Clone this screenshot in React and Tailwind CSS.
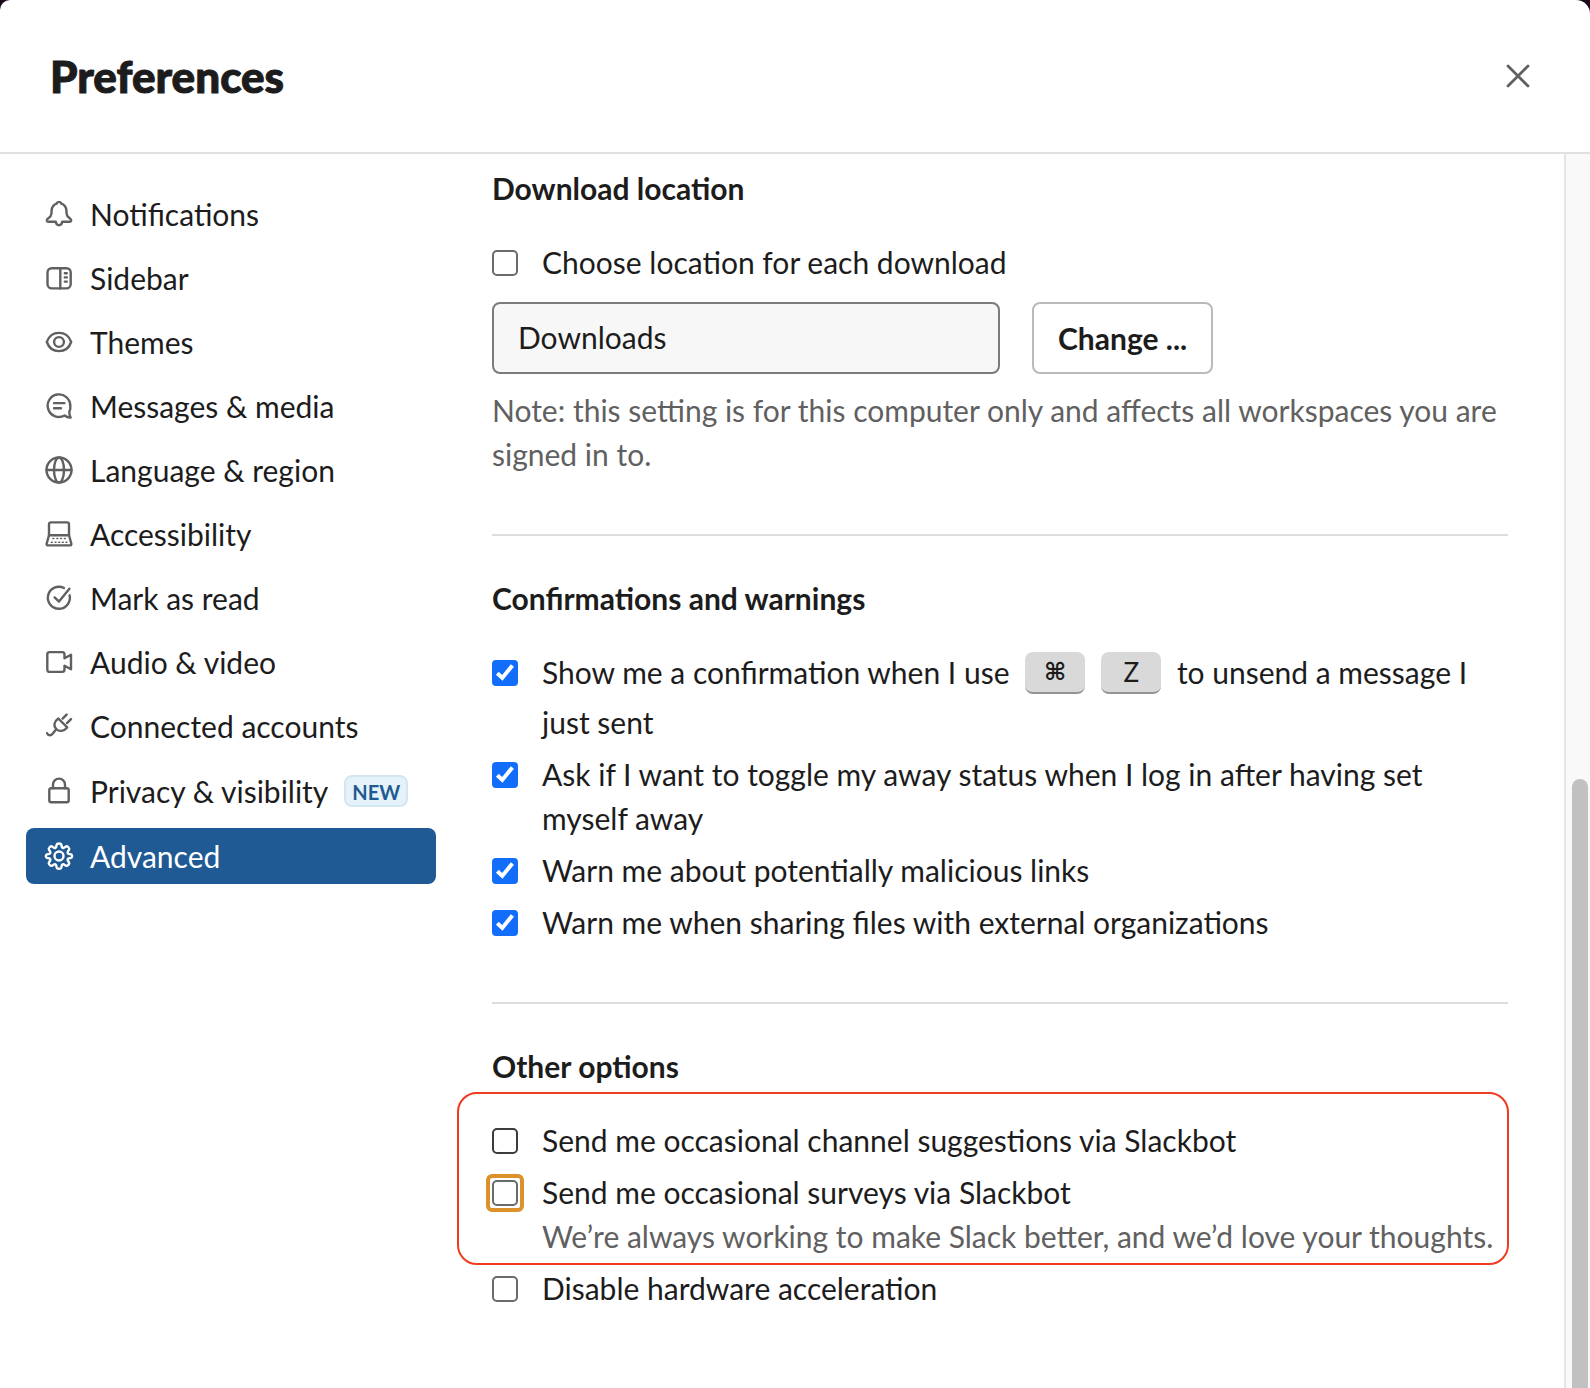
import React from "react";

const iconProps = {
  width: 30,
  height: 30,
  viewBox: "0 0 30 30",
  fill: "none",
  stroke: "currentColor",
  strokeWidth: 2.4,
  strokeLinecap: "round",
  strokeLinejoin: "round",
  "aria-hidden": true,
  className: "shrink-0",
};

const Bell = () => (
  <svg {...iconProps}>
    <path d="M12.600 4.700a2.500 2.500 0 0 1 4.800 0c3.200 1.100 4.800 3.600 5 6.900l.2 3.100c.1 1.800 1.100 3.200 3.100 4.600 1 .7 1.700 1.400 1.500 2.300-.2.800-.8 1.100-1.700 1.100h-7.300c-.3 2.400-1.300 3.600-3.200 3.600s-2.900-1.200-3.200-3.600H4.500c-.9 0-1.500-.3-1.700-1.100-.2-.9.5-1.600 1.500-2.300 2-1.400 3-2.800 3.100-4.600l.2-3.100c.2-3.300 1.800-5.800 5-6.900z" />
  </svg>
);

const Sidebar = () => (
  <svg {...iconProps}>
    <rect x="3.500" y="5.200" width="23.200" height="20.200" rx="4.200" />
    <path d="M16.300 5.200v20.200M20.800 10.200h2M20.800 14.400h2M20.800 18.600h2" />
  </svg>
);

const Eye = () => (
  <svg {...iconProps}>
    <path d="M2.800 15C4.800 9.300 9.300 5.900 15 5.900S25.200 9.300 27.200 15C25.200 20.700 20.700 24.100 15 24.100S4.800 20.700 2.800 15z" />
    <circle cx="15" cy="15" r="4.900" />
  </svg>
);

const Message = () => (
  <svg {...iconProps}>
    <path d="M26.300 14.700A11.300 11.300 0 1 0 20.600 24.500c1.600 1.300 3.500 2.200 6 2-.9-1.400-1.300-3.200-1.300-5.400a11.300 11.300 0 0 0 1-6.400z" />
    <path d="M10 12.100h10.400M10 17.200h7" />
  </svg>
);

const Globe = () => (
  <svg {...iconProps}>
    <circle cx="15" cy="15" r="12.500" />
    <ellipse cx="15" cy="15" rx="5" ry="12.500" />
    <path d="M2.500 15h25" />
  </svg>
);

const Laptop = () => (
  <svg {...iconProps}>
    <path d="M5 16.200V5.400c0-1.300.7-2 2-2h16c1.300 0 2 .7 2 2v10.800" />
    <path d="M5 16.200h20l2.300 8.300c.3 1.200-.3 1.900-1.500 1.900H4.200c-1.200 0-1.800-.7-1.500-1.900z" />
    <path strokeWidth="1.600" d="M9 19.500h.8M12.900 19.500h.8M16.600 19.500h.8M20.400 19.500h.8M7.400 23.200h.8M11.200 23.200h.8M14.800 23.200h.8M18.400 23.200h.8M22 23.200h.8" />
  </svg>
);

const MarkRead = () => (
  <svg {...iconProps}>
    <path d="M20 5A11 11 0 1 0 25.600 12.300" />
    <path d="M10.600 14.400l4.400 4.200L25.400 5.800" />
  </svg>
);

const Video = () => (
  <svg {...iconProps}>
    <path d="M5.600 5.100h12.600c1.500 0 2.300.8 2.300 2.300v3.900l6.500-3.600v14.600l-6.500-3.600v3.900c0 1.500-.8 2.300-2.300 2.300H5.600c-1.500 0-2.300-.8-2.300-2.300V7.400c0-1.500.8-2.300 2.300-2.300z" />
  </svg>
);

const Plug = () => (
  <svg {...iconProps}>
    <path d="M14.300 7.500l8.900 8.900c-3.500 4.200-8.100 4.500-11 1.600s-2.400-7.300 2.100-10.500z" />
    <path d="M18.600 7.600l4-4M23 12.100l4-4M12 18.600l-3.400 4.200c-1.700 2.100-4.400 1.800-5.500-.6" />
  </svg>
);

const Lock = () => (
  <svg {...iconProps}>
    <rect x="5.300" y="12.200" width="19.400" height="14" rx="2" />
    <path d="M9 12.200V8.600a6 6 0 0 1 12 0v3.600" />
  </svg>
);

const Gear = () => (
  <svg {...iconProps}>
    <path d="M12.700 3.600c.4-1.500 4.200-1.500 4.600 0l.5 2.300c.3 1 1.200 1.300 2.100.9l2.100-1.300c1.300-.8 3.900 1.800 3.100 3.100l-1.300 2.100c-.4.900-.1 1.800.9 2.100l2.300.5c1.500.4 1.500 3.200 0 3.600l-2.300.5c-1 .3-1.300 1.200-.9 2.100l1.300 2.100c.8 1.300-1.800 3.900-3.100 3.100l-2.100-1.300c-.9-.4-1.800-.1-2.100.9l-.5 2.300c-.4 1.500-4.200 1.500-4.600 0l-.5-2.300c-.3-1-1.200-1.300-2.100-.9L8 24.700c-1.300.8-3.900-1.800-3.100-3.100l1.300-2.100c.4-.9.1-1.800-.9-2.100l-2.300-.5c-1.500-.4-1.500-3.200 0-3.600l2.300-.5c1-.3 1.300-1.200.9-2.100L4.900 8.600C4.100 7.300 6.700 4.700 8 5.500l2.100 1.300c.9.400 1.800.1 2.100-.9z" />
    <circle cx="15" cy="15" r="4.500" />
  </svg>
);

const navItems = [
  { label: "Notifications", Icon: Bell },
  { label: "Sidebar", Icon: Sidebar },
  { label: "Themes", Icon: Eye },
  { label: "Messages & media", Icon: Message },
  { label: "Language & region", Icon: Globe },
  { label: "Accessibility", Icon: Laptop },
  { label: "Mark as read", Icon: MarkRead },
  { label: "Audio & video", Icon: Video },
  { label: "Connected accounts", Icon: Plug },
  { label: "Privacy & visibility", Icon: Lock, badge: "NEW" },
  { label: "Advanced", Icon: Gear, active: true },
];

function NavItem({ label, Icon, badge, active }) {
  return (
    <li>
      <button
        type="button"
        aria-current={active ? "page" : undefined}
        className={
          active
            ? "flex w-full items-center gap-4 rounded-lg bg-[#1f5a94] py-[6px] pl-[18px] text-left text-white"
            : "flex w-full items-center gap-4 rounded-lg py-[6px] pl-[18px] text-left"
        }
      >
        <span className={active ? "text-white" : "text-[#616061]"}>
          <Icon />
        </span>
        <span>{label}</span>
        {badge && (
          <span className="my-[7px] rounded-lg border-2 border-[#d3e7f3] bg-[#e5f2f9] px-[6px] pt-[2px] text-[20px] leading-[26px] font-bold text-[#1f5a94]">
            {badge}
          </span>
        )}
      </button>
    </li>
  );
}

function Check({ id, checked, focused, dark, hint, children }) {
  return (
    <div className="flex items-start gap-6">
      <span className="relative mt-[10px] flex size-[26px] shrink-0">
        <input
          id={id}
          type="checkbox"
          defaultChecked={checked}
          className={
            "peer size-[26px] appearance-none rounded-[5px] border-2 bg-white checked:rounded-sm checked:border-[#126dfb] checked:bg-[#126dfb] " +
            (dark ? "border-[#3c3c3c]" : "border-[#6b6a6b]")
          }
        />
        {focused && (
          <span className="pointer-events-none absolute -inset-[6px] rounded-md border-4 border-[#dc912b]" />
        )}
        <svg
          viewBox="0 0 26 26"
          fill="none"
          stroke="white"
          strokeWidth="4"
          aria-hidden="true"
          className="pointer-events-none absolute inset-0 hidden peer-checked:block"
        >
          <path d="M5.300 13.200l5 4.700L20.400 5.400" />
        </svg>
      </span>
      <div className="min-w-0 flex-1">
        <label htmlFor={id} className="block">
          {children}
        </label>
        {hint && <p className="whitespace-nowrap text-[#616061]">{hint}</p>}
      </div>
    </div>
  );
}

const Key = ({ children, symbol }) => (
  <kbd
    className={
      "mx-2 mb-[6px] inline-flex h-[42px] w-[60px] items-center justify-center rounded-lg border-b-2 border-[#949494] bg-[#d9d9d9] align-middle leading-none " +
      (symbol ? "font-['DejaVu_Sans',sans-serif] text-[24px] font-bold" : "font-[Lato,sans-serif] text-[26px]")
    }
  >
    {children}
  </kbd>
);

const Heading = ({ children }) => <h2 className="mb-[30px] font-bold">{children}</h2>;

export default function App() {
  return (
    <div className="min-h-screen bg-[#1a0a1a] font-[Lato,sans-serif] text-[30px] leading-[44px] text-[#1d1c1d]">
      <div role="dialog" aria-labelledby="title" className="flex min-h-screen flex-col rounded-tl-[10px] rounded-tr-[14px] bg-white">
        <header className="flex items-center justify-between border-b-2 border-[#e0e0e0] pt-12 pr-12 pb-12 pl-[50px]">
          <h1 id="title" className="text-[44px] leading-[56px] font-black [-webkit-text-stroke:1px_#1d1c1d]">
            Preferences
          </h1>
          <button type="button" aria-label="Close" className="flex size-12 items-center justify-center text-[#616061]">
            <svg {...iconProps}>
              <path strokeWidth="2.800" d="M5 5l20 20M25 5L5 25" />
            </svg>
          </button>
        </header>

        <div className="flex flex-1">
          <nav aria-label="Preferences" className="w-[462px] shrink-0 pt-8 pr-[26px] pl-[26px]">
            <ul className="flex flex-col gap-2">
              {navItems.map((item) => (
                <NavItem key={item.label} {...item} />
              ))}
            </ul>
          </nav>

          <main className="min-w-0 flex-1 pt-3 pr-14 pl-[30px]">
            <section className="border-b-2 border-[#dddddd] pb-[58px]">
              <Heading>Download location</Heading>
              <Check id="choose">Choose location for each download</Check>
              <div className="mt-[18px] mb-[14px] flex gap-8">
                <input
                  type="text"
                  aria-label="Download folder"
                  readOnly
                  defaultValue="Downloads"
                  className="h-[72px] w-1/2 rounded-lg border-2 border-[#7c7b7c] bg-[#f7f7f7] px-6 pb-[2px]"
                />
                <button type="button" className="h-[72px] rounded-lg border-2 border-[#bbbabb] px-6 font-bold">
                  Change ...
                </button>
              </div>
              <p className="text-[#616061]">
                Note: this setting is for this computer only and affects all workspaces you are signed in to.
              </p>
            </section>

            <section className="border-b-2 border-[#dddddd] pt-10 pb-[58px]">
              <Heading>Confirmations and warnings</Heading>
              <div className="flex flex-col gap-2">
                <Check id="unsend" checked>
                  Show me a confirmation when I use <Key symbol>⌘</Key>
                  <Key>Z</Key> to unsend a message I just sent
                </Check>
                <Check id="away" checked>
                  Ask if I want to toggle my away status when I log in after having set myself away
                </Check>
                <Check id="links" checked>
                  Warn me about potentially malicious links
                </Check>
                <Check id="files" checked>
                  Warn me when sharing files with external organizations
                </Check>
              </div>
            </section>

            <section className="pt-10">
              <Heading>Other options</Heading>
              <div className="flex flex-col gap-2">
                <div className="relative flex flex-col gap-2">
                  <div className="pointer-events-none absolute -top-[26px] -right-[1px] -bottom-[7px] -left-[35px] rounded-[20px] border-2 border-[#ef3b20]" />
                  <Check id="suggestions" dark>
                    Send me occasional channel suggestions via Slackbot
                  </Check>
                  <Check id="surveys" focused hint="We’re always working to make Slack better, and we’d love your thoughts.">
                    Send me occasional surveys via Slackbot
                  </Check>
                </div>
                <Check id="hardware">Disable hardware acceleration</Check>
              </div>
            </section>
          </main>

          <div className="flex w-[26px] shrink-0 flex-col items-end border-l-2 border-[#e4e4e4] bg-[#f9f9f9] pr-[2px]">
            <div className="basis-1/2" />
            <div className="mt-2 w-4 flex-1 rounded-t-full bg-[#c1c1c1]" />
          </div>
        </div>
      </div>
    </div>
  );
}
